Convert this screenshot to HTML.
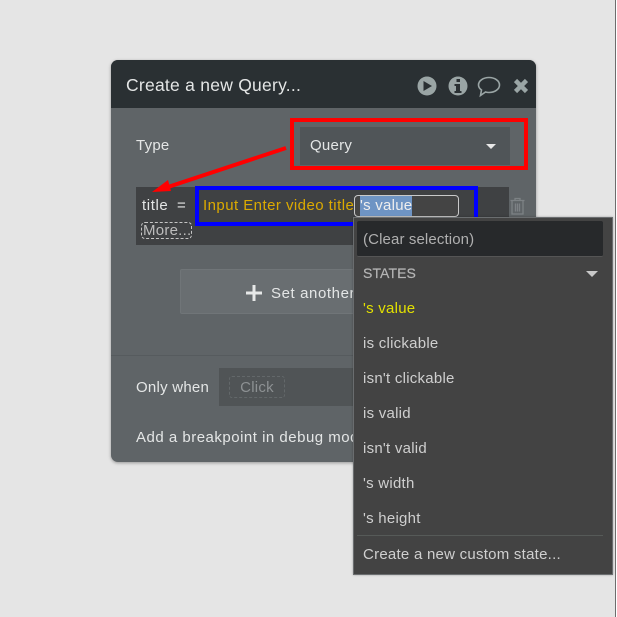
<!DOCTYPE html>
<html><head><meta charset="utf-8"><style>
html,body{margin:0;padding:0;width:617px;height:617px;overflow:hidden;background:#e5e5e5}
body{position:relative;font-family:"Liberation Sans",sans-serif;color:#e4e6e6}
.a{position:absolute;box-sizing:border-box}
.t{position:absolute;white-space:nowrap;font-size:15px;line-height:20px;letter-spacing:.25px;filter:blur(.3px)}
.m{color:#cfcfcf}
</style></head><body>
<div class="a" style="left:615px;top:0;width:1px;height:617px;background:#6d6d6d"></div>
<div class="a" style="left:616px;top:0;width:1px;height:617px;background:#fff"></div>
<div class="a" style="left:111px;top:60px;width:425px;height:402px;background:#5f6467;border-radius:7px;overflow:hidden;box-shadow:0 1px 3px rgba(0,0,0,.35)">
<div class="a" style="left:0;top:0;width:425px;height:48px;background:#2a3033"></div>
<div class="a" style="left:0;top:295px;width:425px;height:1px;background:#565b5e"></div>
</div>
<div class="t" style="left:126px;top:75px;font-size:17.5px">Create a new Query...</div>
<svg class="a" style="left:416px;top:74px" width="112" height="24" viewBox="0 0 112 24">
<circle cx="11" cy="12" r="9.5" fill="#9aa5a5"/><path d="M7.5 7 L16 12 L7.5 17Z" fill="#2a3033"/>
<circle cx="42" cy="12" r="9.5" fill="#9aa5a5"/><rect x="40.5" y="5" width="3.5" height="3" fill="#2a3033"/><path d="M38.5 10h5.5v7h1.5v2h-7v-2h1.5v-5h-1.5z" fill="#2a3033"/>
<path d="M73 3.500c5.800 0 10.500 3.300 10.500 7.500s-4.700 7.500-10.500 7.500c-1.300 0-2.500-.2-3.500-.5l-5 3.500l1-5.500c-1.800-1.300-3-3-3-5c0-4.200 4.700-7.500 10.500-7.500z" fill="none" stroke="#9aa5a5" stroke-width="1.600"/>
<path d="M99.500 6.500l11 11M110.500 6.500l-11 11" stroke="#9aa5a5" stroke-width="4.500" fill="none"/>
</svg>
<div class="t" style="left:136px;top:136px">Type</div>
<div class="a" style="left:300px;top:127px;width:210px;height:38px;background:#505558"></div>
<div class="a" style="left:290px;top:118px;width:238px;height:52px;border:4px solid #f00"></div>
<div class="t" style="left:310px;top:136px">Query</div>
<div class="a" style="left:486px;top:144px;width:0;height:0;border-left:5px solid transparent;border-right:5px solid transparent;border-top:5px solid #e8e8e8"></div>
<div class="a" style="left:136px;top:187px;width:373px;height:58px;background:#3f4143"></div>
<div class="t" style="left:142px;top:196px;letter-spacing:.6px">title</div>
<div class="t" style="left:177px;top:196px">=</div>
<div class="t" style="left:141px;top:222px;width:51px;height:17px;line-height:16px;border:1px dashed #c5c5c5;border-radius:4px;color:#bdbdbd;box-sizing:border-box;padding-left:1px;overflow:hidden">More...</div>
<div class="a" style="left:195px;top:186px;width:283px;height:40px;border:4px solid #00f"></div>
<div class="t" style="left:203px;top:196px;color:#dcaa00;letter-spacing:.45px">Input Enter video title</div>
<div class="a" style="left:354px;top:195px;width:105px;height:22px;border:1px solid #c9c9c9;border-radius:4px;background:#444"></div>
<div class="a" style="left:360px;top:196px;width:52px;height:20px;background:#6e94c4"></div>
<div class="t" style="left:360px;top:196px;color:#eee">'s value</div>
<svg class="a" style="left:508px;top:196px" width="20" height="20" viewBox="0 0 20 20" fill="none" stroke="#7d8285" stroke-width="1.300"><path d="M2.500 4.500h14M7 4.500V2.500h5v2M4 4.500v13.500h11V4.500M7.500 7.500v8M9.500 7.500v8M11.500 7.500v8"/></svg>
<div class="a" style="left:180px;top:269px;width:200px;height:45px;background:#696e71;border:1px solid #707578;border-radius:2px"></div>
<svg class="a" style="left:245px;top:284px" width="18" height="18"><path d="M9 1v16M1 9h16" stroke="#e6e8e8" stroke-width="3"/></svg>
<div class="t" style="left:271px;top:284px;letter-spacing:.6px">Set another</div>
<div class="t" style="left:136px;top:378px">Only when</div>
<div class="a" style="left:219px;top:368px;width:140px;height:38px;background:#505456"></div>
<div class="t" style="left:229px;top:376px;width:56px;height:22px;line-height:22px;border:1px dashed #63686a;border-radius:3px;color:#8d9193;text-align:center;box-sizing:border-box">Click</div>
<div class="t" style="left:136px;top:428px;letter-spacing:.5px">Add a breakpoint in debug mode</div>
<div class="a" style="left:353px;top:217px;width:260px;height:358px;background:#434343;border:1px solid #6a6d6f;box-shadow:0 0 2px rgba(0,0,0,.3)"></div>
<div class="a" style="left:357px;top:221px;width:246px;height:36px;background:#27292b;border-bottom:1px solid #555;border-radius:2px"></div>
<div class="t m" style="left:363px;top:230px;color:#b0b0b0;letter-spacing:.12px">(Clear selection)</div>
<div class="t" style="left:363px;top:263px;color:#b5b5b5;font-size:14px;letter-spacing:.1px;-webkit-text-stroke:.2px #b5b5b5">STATES</div>
<div class="a" style="left:586px;top:271px;width:0;height:0;border-left:6px solid transparent;border-right:6px solid transparent;border-top:6px solid #c9c9c9"></div>
<div class="t" style="left:363px;top:299px;color:#e3e000">'s value</div>
<div class="t m" style="left:363px;top:334px">is clickable</div>
<div class="t m" style="left:363px;top:369px">isn't clickable</div>
<div class="t m" style="left:363px;top:404px">is valid</div>
<div class="t m" style="left:363px;top:439px">isn't valid</div>
<div class="t m" style="left:363px;top:474px">'s width</div>
<div class="t m" style="left:363px;top:509px">'s height</div>
<div class="a" style="left:357px;top:535px;width:246px;height:1px;background:#565a58"></div>
<div class="t m" style="left:363px;top:545px">Create a new custom state...</div>
<svg class="a" style="left:150px;top:142px" width="145" height="52"><path d="M136 6L18 45" stroke="#f00" stroke-width="4" fill="none"/><path d="M2 50L18 38L21 49Z" fill="#f00"/></svg>
</body></html>
